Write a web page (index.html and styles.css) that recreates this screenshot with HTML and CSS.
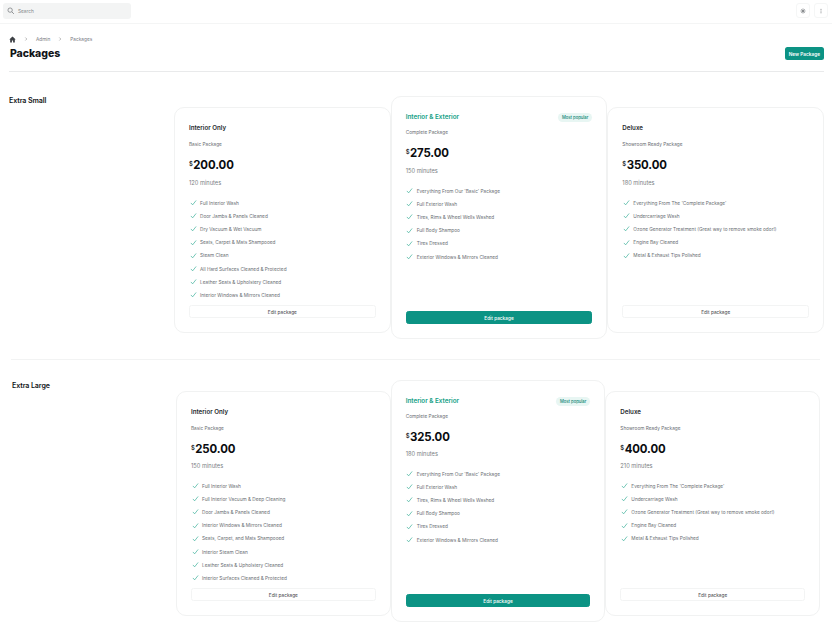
FILE: index.html
```html
<!DOCTYPE html>
<html lang="en">
<head>
<meta charset="utf-8">
<title>Packages</title>
<link rel="stylesheet" href="styles.css">
</head>
<body>
<svg class="defs" width="0" height="0" aria-hidden="true"><symbol id="chk" viewBox="0 0 24 24"><path d="M3 13.5 9 20 21 5" fill="none" stroke="#14a085" stroke-width="2"/></symbol></svg>
<header class="topbar">
  <div class="search">
    <svg class="search-icon" viewBox="0 0 24 24"><circle cx="10" cy="10" r="7" fill="none" stroke="#6f7276" stroke-width="2.2"/><path d="M15.5 15.5 22 22" stroke="#6f7276" stroke-width="2.4"/></svg>
    <span>Search</span>
  </div>
  <div class="tools">
    <button class="tool"><svg viewBox="0 0 24 24"><circle cx="12" cy="12" r="6" fill="#8a8d90"/><path d="M12 1v5M12 18v5M1 12h5M18 12h5M4 4l4 4M16 16l4 4M20 4l-4 4M8 16l-4 4" stroke="#8a8d90" stroke-width="2.4"/></svg></button>
    <button class="tool"><svg viewBox="0 0 24 24"><circle cx="12" cy="5" r="2" fill="#6f7276"/><circle cx="12" cy="12" r="2" fill="#6f7276"/><circle cx="12" cy="19" r="2" fill="#6f7276"/></svg></button>
  </div>
</header>
<main>
  <div class="pagehead">
    <div>
      <nav class="crumbs">
        <svg class="home" viewBox="0 0 24 24"><path d="M12 2 1 12h3v10h6v-7h4v7h6V12h3z" fill="#3d4045"/></svg>
        <svg class="sep" viewBox="0 0 24 24"><path d="m8 3 9 9-9 9" fill="none" stroke="#555" stroke-width="2.4"/></svg>
        <span>Admin</span>
        <svg class="sep" viewBox="0 0 24 24"><path d="m8 3 9 9-9 9" fill="none" stroke="#555" stroke-width="2.4"/></svg>
        <span>Packages</span>
      </nav>
      <h1>Packages</h1>
    </div>
    <button class="new">New Package</button>
  </div>

  <section class="group small">
    <h2>Extra Small</h2>
    <div class="cards">
      <article class="card">
        <h3>Interior Only</h3>
        <p class="sub">Basic Package</p>
        <p class="price"><sup>$</sup>200.00</p>
        <p class="mins">120 minutes</p>
        <ul>
          <li><svg><use href="#chk"/></svg>Full Interior Wash</li>
          <li><svg><use href="#chk"/></svg>Door Jambs &amp; Panels Cleaned</li>
          <li><svg><use href="#chk"/></svg>Dry Vacuum &amp; Wet Vacuum</li>
          <li><svg><use href="#chk"/></svg>Seats, Carpet &amp; Mats Shampooed</li>
          <li><svg><use href="#chk"/></svg>Steam Clean</li>
          <li><svg><use href="#chk"/></svg>All Hard Surfaces Cleaned &amp; Protected</li>
          <li><svg><use href="#chk"/></svg>Leather Seats &amp; Upholstery Cleaned</li>
          <li><svg><use href="#chk"/></svg>Interior Windows &amp; Mirrors Cleaned</li>
        </ul>
        <button class="edit">Edit package</button>
      </article>
      <article class="card featured">
        <div class="titlerow"><h3>Interior &amp; Exterior</h3><span class="badge">Most popular</span></div>
        <p class="sub">Complete Package</p>
        <p class="price"><sup>$</sup>275.00</p>
        <p class="mins">150 minutes</p>
        <ul>
          <li><svg><use href="#chk"/></svg>Everything From Our 'Basic' Package</li>
          <li><svg><use href="#chk"/></svg>Full Exterior Wash</li>
          <li><svg><use href="#chk"/></svg>Tires, Rims &amp; Wheel Wells Washed</li>
          <li><svg><use href="#chk"/></svg>Full Body Shampoo</li>
          <li><svg><use href="#chk"/></svg>Tires Dressed</li>
          <li><svg><use href="#chk"/></svg>Exterior Windows &amp; Mirrors Cleaned</li>
        </ul>
        <button class="edit primary">Edit package</button>
      </article>
      <article class="card">
        <h3>Deluxe</h3>
        <p class="sub">Showroom Ready Package</p>
        <p class="price"><sup>$</sup>350.00</p>
        <p class="mins">180 minutes</p>
        <ul>
          <li><svg><use href="#chk"/></svg>Everything From The 'Complete Package'</li>
          <li><svg><use href="#chk"/></svg>Undercarriage Wash</li>
          <li><svg><use href="#chk"/></svg>Ozone Generator Treatment (Great way to remove smoke odor!)</li>
          <li><svg><use href="#chk"/></svg>Engine Bay Cleaned</li>
          <li><svg><use href="#chk"/></svg>Metal &amp; Exhaust Tips Polished</li>
        </ul>
        <button class="edit">Edit package</button>
      </article>
    </div>
  </section>

  <section class="group large">
    <h2>Extra Large</h2>
    <div class="cards">
      <article class="card">
        <h3>Interior Only</h3>
        <p class="sub">Basic Package</p>
        <p class="price"><sup>$</sup>250.00</p>
        <p class="mins">150 minutes</p>
        <ul>
          <li><svg><use href="#chk"/></svg>Full Interior Wash</li>
          <li><svg><use href="#chk"/></svg>Full Interior Vacuum &amp; Deep Cleaning</li>
          <li><svg><use href="#chk"/></svg>Door Jambs &amp; Panels Cleaned</li>
          <li><svg><use href="#chk"/></svg>Interior Windows &amp; Mirrors Cleaned</li>
          <li><svg><use href="#chk"/></svg>Seats, Carpet, and Mats Shampooed</li>
          <li><svg><use href="#chk"/></svg>Interior Steam Clean</li>
          <li><svg><use href="#chk"/></svg>Leather Seats &amp; Upholstery Cleaned</li>
          <li><svg><use href="#chk"/></svg>Interior Surfaces Cleaned &amp; Protected</li>
        </ul>
        <button class="edit">Edit package</button>
      </article>
      <article class="card featured">
        <div class="titlerow"><h3>Interior &amp; Exterior</h3><span class="badge">Most popular</span></div>
        <p class="sub">Complete Package</p>
        <p class="price"><sup>$</sup>325.00</p>
        <p class="mins">180 minutes</p>
        <ul>
          <li><svg><use href="#chk"/></svg>Everything From Our 'Basic' Package</li>
          <li><svg><use href="#chk"/></svg>Full Exterior Wash</li>
          <li><svg><use href="#chk"/></svg>Tires, Rims &amp; Wheel Wells Washed</li>
          <li><svg><use href="#chk"/></svg>Full Body Shampoo</li>
          <li><svg><use href="#chk"/></svg>Tires Dressed</li>
          <li><svg><use href="#chk"/></svg>Exterior Windows &amp; Mirrors Cleaned</li>
        </ul>
        <button class="edit primary">Edit package</button>
      </article>
      <article class="card">
        <h3>Deluxe</h3>
        <p class="sub">Showroom Ready Package</p>
        <p class="price"><sup>$</sup>400.00</p>
        <p class="mins">210 minutes</p>
        <ul>
          <li><svg><use href="#chk"/></svg>Everything From The 'Complete Package'</li>
          <li><svg><use href="#chk"/></svg>Undercarriage Wash</li>
          <li><svg><use href="#chk"/></svg>Ozone Generator Treatment (Great way to remove smoke odor!)</li>
          <li><svg><use href="#chk"/></svg>Engine Bay Cleaned</li>
          <li><svg><use href="#chk"/></svg>Metal &amp; Exhaust Tips Polished</li>
        </ul>
        <button class="edit">Edit package</button>
      </article>
    </div>
  </section>
</main>
</body>
</html>
```
FILE: styles.css
```css
* { box-sizing: border-box; }
html, body { height: 100%; overflow: hidden; }
body { margin: 0; background: #fff; color: #111418; font-family: Inter, "Liberation Sans", sans-serif; font-size: 4.75px; }
.defs { display: block; height: 0; }
p, h1, h2, h3, ul { margin: 0; padding: 0; }
button { font-family: inherit; cursor: pointer; }

.topbar { display: flex; justify-content: space-between; height: 24px; padding: 3px 4px 0 3px; border-bottom: 1px solid #f4f5f5; }
.search { display: flex; align-items: center; gap: 3.5px; width: 128px; height: 16px; padding-left: 4px; border-radius: 3px; background: #f3f4f4; color: #85888c; }
.search-icon { width: 7.5px; height: 7.5px; }
.tools { display: flex; gap: 4px; }
.tool { display: flex; align-items: center; justify-content: center; width: 14px; height: 15px; padding: 0; background: #fff; border: 1px solid #f5f6f6; border-radius: 3px; }
.tool svg { width: 6px; height: 6px; }

main { padding: 0 8px 0 9px; }
.pagehead { display: flex; justify-content: space-between; align-items: flex-end; height: 48px; padding-bottom: 11px; border-bottom: 1px solid #e9eaeb; }
.crumbs { display: flex; align-items: center; height: 8px; margin-bottom: 4px; color: #777a7f; }
.home { width: 7px; height: 7px; margin-right: 8px; }
.sep { width: 4px; height: 4px; margin-right: 8px; }
.crumbs span { margin-right: 8px; }
h1 { margin: 0 0 -1px 1px; font-size: 10.5px; line-height: 14px; font-weight: 800; letter-spacing: -.05px; }
.new { height: 13px; padding: 0 4px; border: 0; border-radius: 2.5px; background: #0c9384; color: #fff; font-size: 4.75px; font-weight: 600; white-space: nowrap; }

.group { display: flex; align-items: flex-start; }
.group h2 { font-size: 7.1px; line-height: 10px; font-weight: 600; letter-spacing: -.1px; flex: none; width: 165px; }
.small { margin-top: 24px; }
.large { margin: 20px 4px 0 2px; padding-top: 20px; border-top: 1px solid #f2f3f3; }
.large h2 { padding-left: 1px; margin-top: 1px; }
.cards { display: flex; flex: 1; align-items: flex-start; }
.small .card { height: 226px; margin-top: 11px; }
.small .featured { height: 243px; margin-top: 0; }
.large .card { height: 225px; margin-top: 11px; }
.large .featured { height: 242px; margin-top: 0; }
.card { display: flex; flex-direction: column; flex: 1; min-width: 0; padding: 15px 14px 14px; background: #fff; border: 1px solid #f1f2f2; border-radius: 10px; }
.card h3 { font-size: 6.2px; line-height: 10px; font-weight: 600; color: #26292d; }
.card .titlerow { display: flex; justify-content: space-between; align-items: center; }
.card.featured h3 { color: #14a085; font-size: 6.3px; }
.badge { padding: 0 4px; height: 9px; line-height: 9px; border-radius: 5px; background: #e8f6f3; color: #0c8374; font-size: 4.2px; font-weight: 500; }
.sub { margin-top: 7px; line-height: 8px; color: #696d72; }
.featured .sub { margin-top: 6px; }
.price { margin-top: 6.5px; margin-bottom: -.5px; font-size: 11.4px; line-height: 20px; font-weight: 700; letter-spacing: -.1px; color: #0a0c0f; }
.price sup { font-size: 6px; font-weight: 500; vertical-align: 3px; line-height: 0; margin-right: .5px; }
.mins { margin-top: 5px; font-size: 5.7px; line-height: 8px; color: #7a7e82; }
.large .mins { margin-top: 4px; }
ul { list-style: none; margin-top: 9px; }
li { display: flex; align-items: center; height: 13.2px; color: #696d72; }
li svg { width: 7px; height: 7px; margin-left: .5px; margin-right: 3.5px; flex: none; }
.edit { margin-top: auto; height: 13px; background: #fff; border: 1px solid #f3f4f4; border-radius: 2.5px; color: #3d4045; font-size: 4.75px; }
.edit.primary { background: #0c9384; border-color: #0c9384; color: #fff; font-weight: 500; }
```
